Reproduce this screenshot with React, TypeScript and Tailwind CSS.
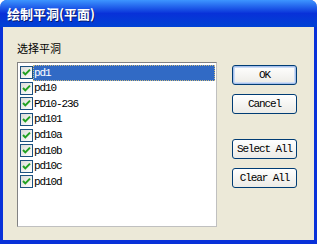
import React from "react";

const items = ["pd1", "pd10", "PD10-236", "pd101", "pd10a", "pd10b", "pd10c", "pd10d"];

function Check() {
  return (
    <div className="w-[13px] h-[13px] shrink-0 border border-[#1c5180] bg-gradient-to-br from-[#dcdcd7] to-[#ffffff] flex items-center justify-center">
      <svg width="11" height="11" viewBox="0 0 11 11">
        <path d="M2 5 L4.3 7.4 L9 2.6" fill="none" stroke="#21a121" strokeWidth="2" />
      </svg>
    </div>
  );
}

function Btn({ label, def }: { label: string; def?: boolean }) {
  return (
    <div
      className={
        "w-[65px] h-[20px] rounded-[3px] border border-[#003c74] bg-gradient-to-b from-[#ffffff] to-[#ecebe6] flex items-center justify-center text-[11px] tracking-[-1.1px] text-black " +
        (def ? "shadow-[inset_0_0_0_1px_#a6c0ec,inset_0_0_0_2px_#cddcf4]" : "")
      }
      style={{ fontFamily: '"Liberation Mono", monospace' }}
    >
      {label}
    </div>
  );
}

export default function App() {
  return (
    <div className="w-[317px] h-[244px] bg-white overflow-hidden">
      <div className="w-full h-full flex flex-col rounded-t-[7px] overflow-hidden bg-[#0831d9]">
        <div className="h-[27px] shrink-0 flex items-center pl-[7px] bg-gradient-to-b from-[#3d95ff] via-[#0058ee_20%] to-[#0042d4]">
          <span
            className="text-white font-bold text-[13px] leading-none [text-shadow:1px_1px_0_#0a1e6e]"
            style={{ fontFamily: '"Noto Sans CJK SC", sans-serif' }}
          >
            绘制平洞(平面)
          </span>
        </div>
        <div className="flex-1 mx-[3px] mb-[4px] bg-[#ece9d8] flex pl-[14px] pt-[14px]">
          <div className="flex flex-col">
            <div
              className="text-[11px] leading-[14px] text-black"
              style={{ fontFamily: '"Noto Sans CJK SC", sans-serif' }}
            >
              选择平洞
            </div>
            <div className="mt-[7px] w-[200px] h-[165px] bg-white border border-t-[#828282] border-l-[#828282] border-r-[#c0c0c0] border-b-[#c0c0c0] pt-[2px]">
              {items.map((it, i) => (
                <div key={it} className="h-[15.6px] flex items-center pl-[2px]">
                  <Check />
                  <div
                    className={
                      "flex-1 h-full flex items-center pl-[1px] mr-[1px] text-[11px] tracking-[-1.1px] " +
                      (i === 0
                        ? "bg-[#316ac5] text-white outline outline-1 outline-dotted outline-[#c9b980] -outline-offset-1"
                        : "text-black")
                    }
                    style={{ fontFamily: '"Liberation Mono", monospace' }}
                  >
                    {it}
                  </div>
                </div>
              ))}
            </div>
          </div>
          <div className="ml-[15px] mt-[24px] flex flex-col">
            <Btn label="OK" def />
            <div className="mt-[9px]">
              <Btn label="Cancel" />
            </div>
            <div className="mt-[25px]">
              <Btn label="Select All" />
            </div>
            <div className="mt-[9px]">
              <Btn label="Clear All" />
            </div>
          </div>
        </div>
      </div>
    </div>
  );
}
